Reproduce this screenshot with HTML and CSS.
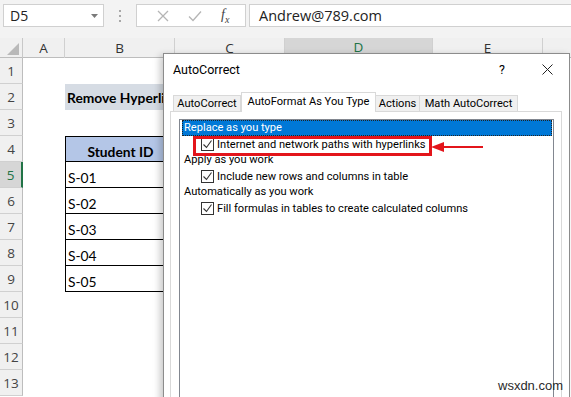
FILE: index.html
```html
<!DOCTYPE html>
<html>
<head>
<meta charset="utf-8">
<link rel="stylesheet" href="styles.css">
</head>
<body>
<div class="app">
  <div class="fbar">
    <div class="namebox"><span>D5</span><svg class="caret" width="7" height="4" viewBox="0 0 7 4"><path d="M0 0h7L3.5 4z" fill="#7a7a7a"/></svg></div>
    <div class="grip"><i></i><i></i><i></i></div>
    <div class="fxbox">
      <svg width="12" height="12" viewBox="0 0 12 12"><path d="M1 1l10 10M11 1L1 11" stroke="#b5b5b5" stroke-width="1.3"/></svg>
      <svg width="14" height="12" viewBox="0 0 14 12"><path d="M1 6.5l4 4L13 1.5" stroke="#b5b5b5" stroke-width="1.3" fill="none"/></svg>
      <span class="fx">f<sub>x</sub></span>
    </div>
    <div class="formula">Andrew@789.com</div>
  </div>

  <div class="sheet">
    <div class="colhead">
      <div class="corner"><svg width="12" height="12" viewBox="0 0 12 12"><path d="M12 0V12H0z" fill="#b9b9b9"/></svg></div>
      <div class="ch">A</div><div class="ch">B</div><div class="ch">C</div><div class="ch sel">D</div><div class="ch">E</div><div class="ch last"></div>
    </div>
    <div class="row"><div class="rh">1</div></div>
    <div class="row"><div class="rh">2</div><div class="ca"></div><div class="cell title"><span class="clip">Remove Hyperlinks</span></div></div>
    <div class="row"><div class="rh">3</div></div>
    <div class="row"><div class="rh">4</div><div class="ca"></div><div class="cell tb thead">Student ID</div></div>
    <div class="row"><div class="rh rsel">5</div><div class="ca"></div><div class="cell tb">S-01</div></div>
    <div class="row"><div class="rh">6</div><div class="ca"></div><div class="cell tb">S-02</div></div>
    <div class="row"><div class="rh">7</div><div class="ca"></div><div class="cell tb">S-03</div></div>
    <div class="row"><div class="rh">8</div><div class="ca"></div><div class="cell tb">S-04</div></div>
    <div class="row"><div class="rh">9</div><div class="ca"></div><div class="cell tb">S-05</div></div>
    <div class="row"><div class="rh">10</div></div>
    <div class="row"><div class="rh">11</div></div>
    <div class="row"><div class="rh">12</div></div>
    <div class="row"><div class="rh">13</div></div>
  </div>

  <div class="dialog">
    <div class="dtitle">
      <span class="dname">AutoCorrect</span>
      <span class="help">?</span>
      <svg class="close" width="11" height="11" viewBox="0 0 11 11"><path d="M0.5 0.5l10 10M10.5 0.5l-10 10" stroke="#222" stroke-width="1"/></svg>
    </div>
    <div class="tabs">
      <div class="tab t1">AutoCorrect</div>
      <div class="tab active t2">AutoFormat As You Type</div>
      <div class="tab t3">Actions</div>
      <div class="tab t4">Math AutoCorrect</div>
    </div>
    <div class="page">
      <div class="listbox">
        <div class="item selected">Replace as you type</div>
        <div class="item opt"><span class="cb"><svg width="11" height="11" viewBox="0 0 11 11"><path d="M1.5 5.5l3 3 5-7" stroke="#333" stroke-width="1.1" fill="none"/></svg></span>Internet and network paths with hyperlinks</div>
        <div class="item">Apply as you work</div>
        <div class="item opt"><span class="cb"><svg width="11" height="11" viewBox="0 0 11 11"><path d="M1.5 5.5l3 3 5-7" stroke="#333" stroke-width="1.1" fill="none"/></svg></span>Include new rows and columns in table</div>
        <div class="item">Automatically as you work</div>
        <div class="item opt"><span class="cb"><svg width="11" height="11" viewBox="0 0 11 11"><path d="M1.5 5.5l3 3 5-7" stroke="#333" stroke-width="1.1" fill="none"/></svg></span>Fill formulas in tables to create calculated columns</div>
      </div>
    </div>
  </div>

  <div class="redbox"></div>
  <svg class="arrow" width="54" height="14" viewBox="0 0 54 14"><path d="M12 7H52" stroke="#e3151b" stroke-width="2"/><path d="M0 7L13 2V12z" fill="#e3151b"/></svg>
  <div class="watermark">wsxdn.com</div>
</div>
</body>
</html>
```

FILE: styles.css
```css
* { box-sizing: border-box; }
html, body { margin: 0; padding: 0; }
body { width: 571px; height: 397px; overflow: hidden; background: #fff; font-family: Roboto, "Noto Sans", sans-serif; color: #000; }
.app { position: relative; width: 571px; height: 397px; overflow: hidden; }

/* formula bar */
.fbar { height: 38px; background: #f3f3f3; display: flex; align-items: flex-start; padding-top: 4px; padding-left: 3px; }
.namebox { width: 101px; height: 23px; background: #fff; border: 1px solid #d0d0d0; display: flex; align-items: center; justify-content: space-between; padding: 0 5px 0 6px; font-family: "Open Sans", sans-serif; font-size: 14px; color: #222; }
.caret { margin-top: 1px; }
.grip { width: 32px; height: 23px; display: flex; flex-direction: column; align-items: center; justify-content: center; gap: 3px; }
.grip i { display: block; width: 2px; height: 2px; background: #a8a8a8; }
.fxbox { width: 110px; height: 23px; background: #fff; border: 1px solid #d0d0d0; display: flex; align-items: center; justify-content: space-around; padding: 0 6px 0 10px; }
.fx { font-family: "Liberation Serif", serif; font-style: italic; font-size: 14px; color: #444; }
.fx sub { font-size: 10px; }
.formula { flex: 1; height: 23px; margin-left: 3px; background: #fff; border: 1px solid #d0d0d0; border-right: none; padding-left: 9px; font-family: "Open Sans", sans-serif; font-size: 14.5px; line-height: 21px; color: #222; }

/* sheet */
.sheet { font-family: Lato, sans-serif; }
.colhead { display: grid; grid-template-columns: 23px 42px 110px 110px 148px 110px 1fr; height: 20px; background: #f0f0f0; border-bottom: 1px solid #bdbdbd; }
.corner { border-right: 1px solid #c8c8c8; display: flex; align-items: flex-end; justify-content: flex-end; padding: 0 3px 3px 0; }
.ch { border-right: 1px solid #d0d0d0; display: flex; align-items: center; justify-content: center; font-family: "Open Sans", sans-serif; font-size: 13.5px; color: #333; }
.ch.sel { background: #d6d6d6; color: #217346; border-bottom: 2px solid #217346; }
.ch.last { border-right: none; }
.row { display: grid; grid-template-columns: 23px 42px 110px 1fr; height: 26px; }
.rh { background: #f0f0f0; border-right: 1px solid #bdbdbd; border-bottom: 1px solid #d0d0d0; display: flex; align-items: center; justify-content: center; font-family: "Open Sans", sans-serif; font-size: 13.5px; color: #444; }
.rh.rsel { background: #d6d6d6; color: #217346; border-right: 2px solid #217346; }
.cell { display: flex; align-items: flex-end; padding: 0 2px 1px; font-size: 13.8px; white-space: nowrap; }
.title { background: #d6dce4; font-weight: 700; padding-bottom: 4px; overflow: hidden; }
.clip { display: block; width: 96px; overflow: hidden; white-space: nowrap; }
.tb { border-left: 1px solid #000; border-bottom: 1px solid #000; }
.thead { background: #b4c6e7; font-weight: 700; justify-content: center; border-top: 1px solid #000; }

/* dialog */
.dialog { position: absolute; left: 163px; top: 53px; width: 407px; height: 360px; background: #fff; border: 1px solid #8c8c8c; box-shadow: -3px 2px 7px rgba(0,0,0,0.22); display: flex; flex-direction: column; font-size: 11.1px; }
.dtitle { height: 30px; display: flex; align-items: center; padding-left: 9px; }
.dname { flex: 1; font-size: 12.5px; }
.help { width: 20px; text-align: center; font-size: 12.5px; margin-right: 30px; }
.close { margin-right: 16px; }
.tabs { display: flex; align-items: flex-end; height: 19px; margin-top: 8px; padding-left: 9px; }
.tab { height: 16px; background: #f0f0f0; border: 1px solid #d9d9d9; border-bottom: none; display: flex; align-items: center; justify-content: center; line-height: 14px; white-space: nowrap; }
.t1 { width: 68px; }
.t2 { width: 135px; }
.t3 { width: 44px; border-left: none; }
.t4 { width: 98px; border-left: none; }
.tab.active { background: #fff; position: relative; z-index: 1; margin-bottom: -1px; height: 20px; padding-bottom: 1px; }
.page { flex: 1; margin: 0 7px 0 6px; border: 1px solid #d9d9d9; padding: 7px 7px 0 8px; display: flex; }
.listbox { flex: 1; border: 1px solid #828790; padding: 0 1px 0 2px; }
.item { height: 16px; line-height: 16px; padding-left: 2px; white-space: nowrap; display: flex; align-items: center; }
.item.selected { background: #0078d7; color: #fff; outline: 1px dotted #222; outline-offset: -1px; }
.item.opt { padding-left: 19px; padding-top: 1px; }
.cb { width: 13px; height: 13px; border: 1px solid #333; display: flex; align-items: center; justify-content: center; margin-right: 3px; background: #fff; }

/* annotations */
.redbox { position: absolute; left: 193px; top: 136px; width: 239px; height: 20px; border: 3px solid #e3151b; }
.arrow { position: absolute; left: 431px; top: 140px; }
.watermark { position: absolute; left: 498px; top: 378px; font-family: "Liberation Sans", sans-serif; font-size: 13px; color: #2a2a2a; }
```
